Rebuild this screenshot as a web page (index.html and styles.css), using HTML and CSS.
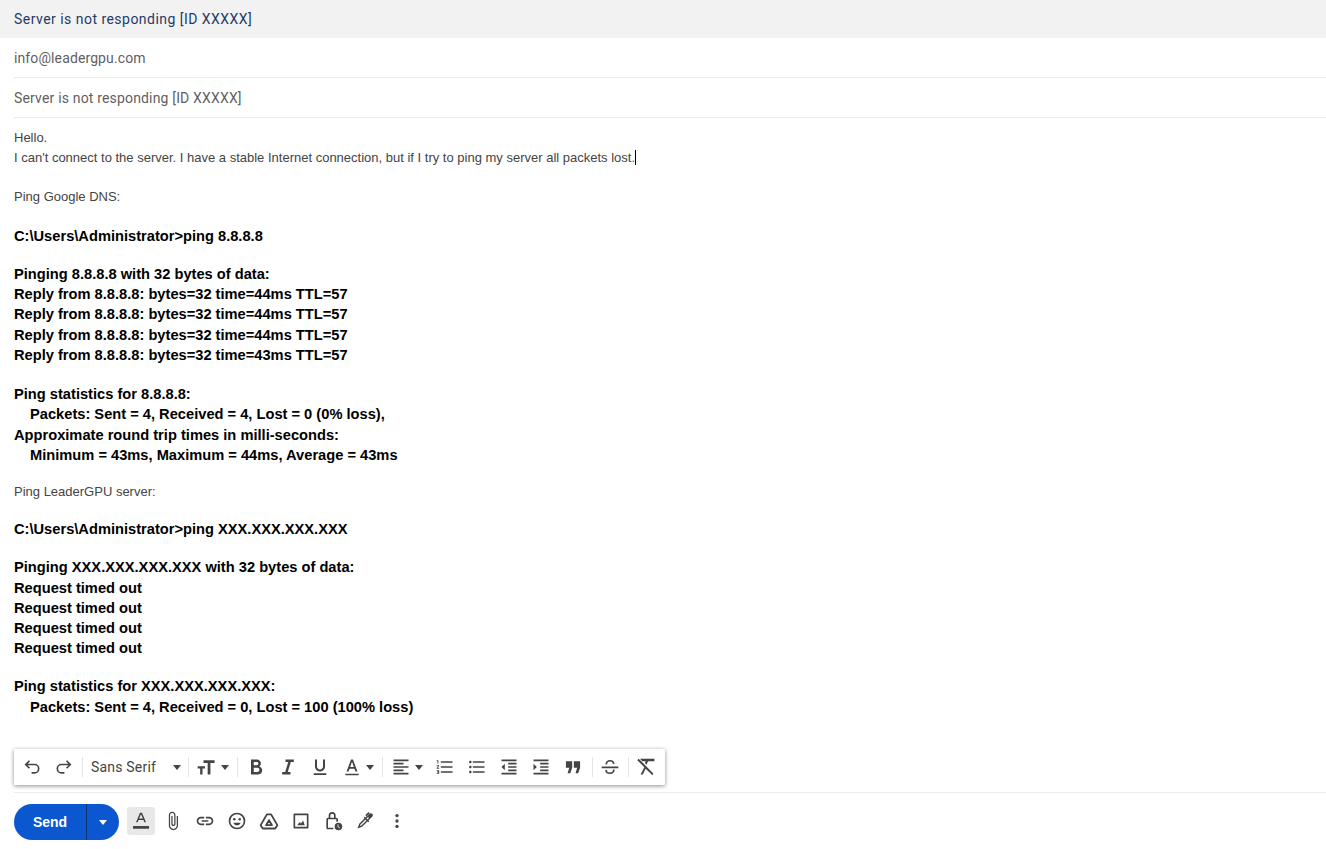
FILE: index.html
```html
<!DOCTYPE html>
<html lang="en">
<head>
<meta charset="utf-8">
<title>Server is not responding [ID XXXXX]</title>
<link rel="stylesheet" href="styles.css">
</head>
<body>
<div class="compose">
  <header class="title">Server is not responding [ID XXXXX]</header>
  <div class="field"><span>info@leadergpu.com</span></div>
  <div class="field subject"><span>Server is not responding [ID XXXXX]</span></div>
  <main class="message">
    <div class="small">Hello.</div>
    <div class="small">I can't connect to the server. I have a stable Internet connection, but if I try to ping my server all packets lost.<span class="caret"></span></div>
    <div class="small g19">Ping Google DNS:</div>
    <div class="bold g19">C:\Users\Administrator&gt;ping 8.8.8.8</div>
    <div class="bold g18">Pinging 8.8.8.8 with 32 bytes of data:</div>
    <div class="bold">Reply from 8.8.8.8: bytes=32 time=44ms TTL=57</div>
    <div class="bold">Reply from 8.8.8.8: bytes=32 time=44ms TTL=57</div>
    <div class="bold">Reply from 8.8.8.8: bytes=32 time=44ms TTL=57</div>
    <div class="bold">Reply from 8.8.8.8: bytes=32 time=43ms TTL=57</div>
    <div class="bold g19">Ping statistics for 8.8.8.8:</div>
    <div class="bold in">Packets: Sent = 4, Received = 4, Lost = 0 (0% loss),</div>
    <div class="bold">Approximate round trip times in milli-seconds:</div>
    <div class="bold in">Minimum = 43ms, Maximum = 44ms, Average = 43ms</div>
    <div class="small g16">Ping LeaderGPU server:</div>
    <div class="bold g17">C:\Users\Administrator&gt;ping XXX.XXX.XXX.XXX</div>
    <div class="bold g18b">Pinging XXX.XXX.XXX.XXX with 32 bytes of data:</div>
    <div class="bold">Request timed out</div>
    <div class="bold">Request timed out</div>
    <div class="bold">Request timed out</div>
    <div class="bold">Request timed out</div>
    <div class="bold g18c">Ping statistics for XXX.XXX.XXX.XXX:</div>
    <div class="bold in">Packets: Sent = 4, Received = 0, Lost = 100 (100% loss)</div>
  </main>
  <div class="toolbar">
    <span class="tool"><svg class="ico line" viewBox="0 0 24 24"><path d="M9 4.500 4.500 9 9 13.500M4.500 9H15a5 5 0 0 1 0 10h-3.500"/></svg></span>
    <span class="tool"><svg class="ico line" viewBox="0 0 24 24"><path d="M15 4.500 19.500 9 15 13.500M19.500 9H9a5 5 0 0 0 0 10h3.500"/></svg></span>
    <i class="sep sep-undo"></i>
    <span class="font-select">Sans Serif<i class="caret-d"></i></span>
    <i class="sep"></i>
    <span class="size-select"><svg class="ico" viewBox="0 0 24 24"><path d="M9 4v3.200h5V21h3.300V7.200h5V4zM2 11v2.800h3V21h2.800v-7.200h3V11z"/></svg><i class="caret-d"></i></span>
    <i class="sep"></i>
    <span class="tool tool-b"><svg class="ico" viewBox="0 0 24 24"><path d="M15.900 11.200c1.200-.8 2-2.100 2-3.500 0-2.600-2-4.700-4.700-4.700H6v18h8.700c2.800 0 4.800-2.300 4.800-5 0-2-1.500-3.900-3.600-4.800zM9.300 6h3.600c1.100 0 2 .8 2 1.900s-.9 2-2 2H9.300zm4.500 12H9.300v-5.100h4.500c1.300 0 2.300 1.100 2.300 2.500S15.100 18 13.800 18z"/></svg></span>
    <span class="tool"><svg class="ico" viewBox="0 0 24 24"><path d="M9 3v3h3.300L8.600 18H5v3h10v-3h-3.300L15.400 6H19V3z"/></svg></span>
    <span class="tool"><svg class="ico" viewBox="0 0 24 24"><path d="M12 17.500c3.310 0 6-2.690 6-6V3h-2.400v8.500c0 1.930-1.670 3.600-3.600 3.600s-3.600-1.670-3.600-3.600V3H6v8.500c0 3.310 2.690 6 6 6zM4.500 19.500v2h15v-2z"/></svg></span>
    <span class="color-select"><svg class="ico" viewBox="0 0 24 24"><path d="M4 20h16v2H4zM10.800 3 5.500 17.500h2.400l1.200-3.500h5.800l1.200 3.500h2.400L13.200 3zm-1 9L12 5.700l2.200 6.300z"/></svg><i class="caret-d"></i></span>
    <i class="sep"></i>
    <span class="align-select"><svg class="ico" viewBox="0 0 24 24"><path d="M15 15H3v2h12v-2zm0-8H3v2h12V7zM3 13h18v-2H3v2zm0 8h18v-2H3v2zM3 3v2h18V3H3z"/></svg><i class="caret-d"></i></span>
    <span class="tool"><svg class="ico" viewBox="0 0 24 24"><path d="M2 17h2v.5H3v1h1v.5H2v1h3v-4H2v1zm1-9h1V4H2v1h1v3zm-1 3h1.800L2 13.100v.9h3v-1H3.200L5 10.900V10H2v1zm5-6v2h14V5H7zm0 14h14v-2H7v2zm0-6h14v-2H7v2z"/></svg></span>
    <span class="tool"><svg class="ico" viewBox="0 0 24 24"><path d="M4 10.500c-.83 0-1.500.67-1.500 1.500s.67 1.500 1.500 1.500 1.500-.67 1.500-1.500-.67-1.500-1.500-1.500zm0-6c-.83 0-1.500.67-1.500 1.500S3.170 7.500 4 7.500 5.500 6.830 5.500 6 4.830 4.500 4 4.500zm0 12c-.83 0-1.500.68-1.500 1.500s.68 1.500 1.500 1.500 1.500-.68 1.500-1.500-.67-1.500-1.500-1.500zM7 19h14v-2H7v2zm0-6h14v-2H7v2zm0-8v2h14V5H7z"/></svg></span>
    <span class="tool"><svg class="ico" viewBox="0 0 24 24"><path d="M11 17h10v-2H11v2zm-8-5 4 4V8l-4 4zm0 9h18v-2H3v2zM3 3v2h18V3H3zm8 6h10V7H11v2zm0 4h10v-2H11v2z"/></svg></span>
    <span class="tool"><svg class="ico" viewBox="0 0 24 24"><path d="M3 21h18v-2H3v2zM3 8v8l4-4-4-4zm8 9h10v-2H11v2zM3 3v2h18V3H3zm8 6h10V7H11v2zm0 4h10v-2H11v2z"/></svg></span>
    <span class="tool"><svg class="ico" viewBox="0 0 24 24"><path d="M3.500 5h7.500v8l-2.300 6.500H5.500L7.500 13h-4zM13 5h7.500v8l-2.300 6.500H15L17 13h-4z"/></svg></span>
    <i class="sep sep-quote"></i>
    <span class="tool"><svg class="ico line" viewBox="0 0 24 24"><path d="M7.500 9C7.500 6.500 9.500 4.500 12 4.500s4.300 1.400 4.500 3.800M2 12.500h20M16.500 15c.3 3-2 4.500-4.500 4.500s-4.700-1.500-4.800-4"/></svg></span>
    <i class="sep sep-strike"></i>
    <span class="tool"><svg class="ico" viewBox="0 0 24 24"><path d="M3.300 2 1.500 3.800 10 12.300 5.500 21h2.700l3.300-7 8 7.500 1.500-1.500zM5 2v.4L7.600 5h4.100l-1 2.300 1.900 1.900 1.900-4.200H22V2z"/></svg></span>
  </div>
  <footer class="actions">
    <div class="send"><span class="send-label">Send</span><span class="send-more"><i class="caret-w"></i></span></div>
    <span class="act active"><svg class="ico" viewBox="0 0 24 24"><path d="M2.400 18h19.200v3.200H2.400zM10.800 2 6 13.500h2l1-2.800h6l1 2.800h2L13.200 2zM9.700 9 12 3.800 14.300 9z"/></svg></span>
    <span class="act"><svg class="ico" viewBox="0 0 24 24"><path d="M16.500 6v11.500c0 2.210-1.790 4-4 4s-4-1.790-4-4V5c0-1.380 1.120-2.500 2.500-2.500s2.500 1.120 2.500 2.500v10.500c0 .55-.45 1-1 1s-1-.45-1-1V6H10v9.500c0 1.380 1.120 2.500 2.500 2.500s2.500-1.120 2.500-2.500V5c0-2.210-1.790-4-4-4S7 2.790 7 5v12.500c0 3.040 2.460 5.500 5.500 5.500s5.500-2.460 5.500-5.500V6h-1.500z"/></svg></span>
    <span class="act"><svg class="ico" viewBox="0 0 24 24"><path d="M17 7h-4v2h4c1.650 0 3 1.350 3 3s-1.350 3-3 3h-4v2h4c2.760 0 5-2.240 5-5s-2.240-5-5-5zm-6 8H7c-1.650 0-3-1.350-3-3s1.350-3 3-3h4V7H7c-2.760 0-5 2.240-5 5s2.240 5 5 5h4v-2zm-3-4h8v2H8z"/></svg></span>
    <span class="act"><svg class="ico" viewBox="0 0 24 24"><path d="M12 2a10 10 0 1 0 0 20 10 10 0 0 0 0-20zm0 18a8 8 0 1 1 0-16 8 8 0 0 1 0 16z"/><circle cx="8.700" cy="9.800" r="1.500"/><circle cx="15.300" cy="9.800" r="1.500"/><path d="M7.500 14h9c-.8 2-2.500 3.200-4.500 3.200S8.300 16 7.500 14z"/></svg></span>
    <span class="act"><svg class="ico line round" viewBox="0 0 24 24"><path d="M9.500 4h5L22 17l-2.500 4h-15L2 17zM12 11l3.500 6h-7z"/></svg></span>
    <span class="act"><svg class="ico" viewBox="0 0 24 24"><path d="M19.500 3h-15C3.600 3 3 3.600 3 4.500v15c0 .9.600 1.500 1.500 1.500h15c.9 0 1.500-.6 1.500-1.500v-15c0-.9-.6-1.500-1.500-1.500zm-.5 16H5V5h14zm-4.500-7.500L12 15l-1.500-1.700L7.500 17h9z"/></svg></span>
    <span class="act"><svg class="ico" viewBox="0 0 24 24"><path d="M16 8h-.8V5.500a4.200 4.200 0 0 0-8.400 0V8H6c-1.100 0-2 .9-2 2v10c0 1.100.9 2 2 2h6.500v-2H6V10h10v3h2v-3c0-1.100-.9-2-2-2zM8.800 5.500a2.200 2.200 0 0 1 4.400 0V8H8.800z"/><circle cx="18.500" cy="18.500" r="4.500"/><path d="M18 16v3l2.200 1.200" class="knock"/></svg></span>
    <span class="act"><svg class="ico" viewBox="0 0 24 24"><path d="M20.700 3.300c-1-1-2.600-1-3.600 0L5 15.400 3 21l5.600-2L20.700 6.900c1-1 1-2.600 0-3.600zM7.700 17.300l-1.800.7.700-1.800 9-9 1.100 1.100z"/><path d="M13 5.500 17 2M11 7.500l5.500 5.500" class="pen"/></svg></span>
    <span class="act"><svg class="ico" viewBox="0 0 24 24"><circle cx="12" cy="5.500" r="2"/><circle cx="12" cy="12" r="2"/><circle cx="12" cy="18.500" r="2"/></svg></span>
  </footer>
</div>
</body>
</html>
```

FILE: styles.css
```css
* { box-sizing: border-box; }
html, body { margin: 0; height: 100%; overflow: hidden; background: #fff; }
.compose {
  height: 849px;
  display: flex;
  flex-direction: column;
  font-family: Roboto, "Liberation Sans", sans-serif;
}
.title {
  height: 38px;
  flex: none;
  padding: 0 14px;
  display: flex;
  align-items: center;
  background: #f2f2f2;
  color: #1f3a68;
  font-size: 14px;
  letter-spacing: .47px;
}
.field {
  height: 40px;
  flex: none;
  margin-left: 14px;
  display: flex;
  align-items: center;
  border-bottom: 1px solid #ececec;
  color: #5f5f5f;
  font-size: 14px;
  letter-spacing: .11px;
}
.subject { letter-spacing: .17px; }
.message {
  flex: 1;
  min-height: 0;
  padding: 10px 14px 0;
  font-family: "Liberation Sans", Arial, sans-serif;
  color: #222;
}
.small { font-size: 13px; line-height: 20px; color: #444; }
.bold { font-size: 14.67px; line-height: 20.25px; font-weight: 700; color: #000; white-space: pre-wrap; }
.g16 { margin-top: 16.9px; }
.g17 { margin-top: 17.1px; }
.g18 { margin-top: 17.6px; }
.g18b { margin-top: 18px; }
.g18c { margin-top: 17.8px; }
.g19 { margin-top: 19px; }
.in { padding-left: 16px; }
.caret {
  display: inline-block;
  width: 1px;
  height: 15px;
  background: #000;
  vertical-align: -3px;
}
.toolbar {
  flex: none;
  width: 651px;
  height: 36px;
  margin: 0 0 7px 14px;
  padding-left: 2px;
  display: flex;
  align-items: center;
  background: #fff;
  box-shadow: 0 1px 4px rgba(0, 0, 0, .45);
  border-radius: 1px;
}
.tool {
  width: 32px;
  height: 36px;
  flex: none;
  display: flex;
  align-items: center;
  justify-content: center;
}
.ico { width: 20px; height: 20px; fill: #444; display: block; }
.ico.line { fill: none; stroke: #444; stroke-width: 2; }
.ico.round { stroke-linejoin: round; stroke-width: 2.2; }
.knock { fill: none; stroke: #fff; stroke-width: 1; }
.pen { fill: none; stroke: #444; stroke-width: 1.800; }
.sep { width: 1px; height: 20px; flex: none; background: #e4e4e4; }
.sep-undo { margin-left: 2px; }
.sep-quote { margin: 0 1px 0 3px; }
.sep-strike { margin: 0 1px 0 2px; }
.caret-d {
  width: 0;
  height: 0;
  flex: none;
  border: 4.5px solid transparent;
  border-top: 5px solid #444;
  border-bottom: 0;
}
.font-select {
  width: 105px;
  flex: none;
  padding: 0 7px 0 8px;
  display: flex;
  align-items: center;
  justify-content: space-between;
  color: #444;
  font-size: 14px;
  letter-spacing: .2px;
}
.size-select, .color-select, .align-select { flex: none; display: flex; align-items: center; }
.size-select { width: 48px; padding-left: 7px; gap: 4.5px; }
.tool-b { margin-left: 2px; }
.color-select { width: 46px; padding-left: 6px; gap: 3.5px; }
.align-select { width: 46px; padding-left: 8px; gap: 3.5px; }
.actions {
  flex: none;
  height: 57px;
  margin-left: 14px;
  padding-top: 11px;
  display: flex;
  align-items: flex-start;
  border-top: 1px solid #ececec;
}
.send {
  width: 105px;
  height: 36px;
  margin-right: 8px;
  display: flex;
  flex: none;
  border-radius: 18px;
  background: #0b57d0;
  color: #fff;
  font-family: "Liberation Sans", sans-serif;
  font-size: 14px;
  font-weight: 700;
}
.send-label { width: 73px; display: flex; align-items: center; justify-content: center; border-right: 1px solid #06316f; }
.send-more { flex: 1; display: flex; align-items: center; justify-content: center; }
.caret-w { width: 0; height: 0; border: 4.5px solid transparent; border-top: 5px solid #fff; border-bottom: 0; }
.act {
  width: 32px;
  height: 34px;
  flex: none;
  display: flex;
  align-items: center;
  justify-content: center;
}
.act.active { position: relative; width: 30px; justify-content: flex-start; padding-left: 4px; }
.act.active::before {
  content: "";
  position: absolute;
  left: 0;
  top: 3px;
  width: 28px;
  height: 28px;
  border-radius: 3px;
  background: #e8e8e8;
}
.act.active .ico { position: relative; }
```
